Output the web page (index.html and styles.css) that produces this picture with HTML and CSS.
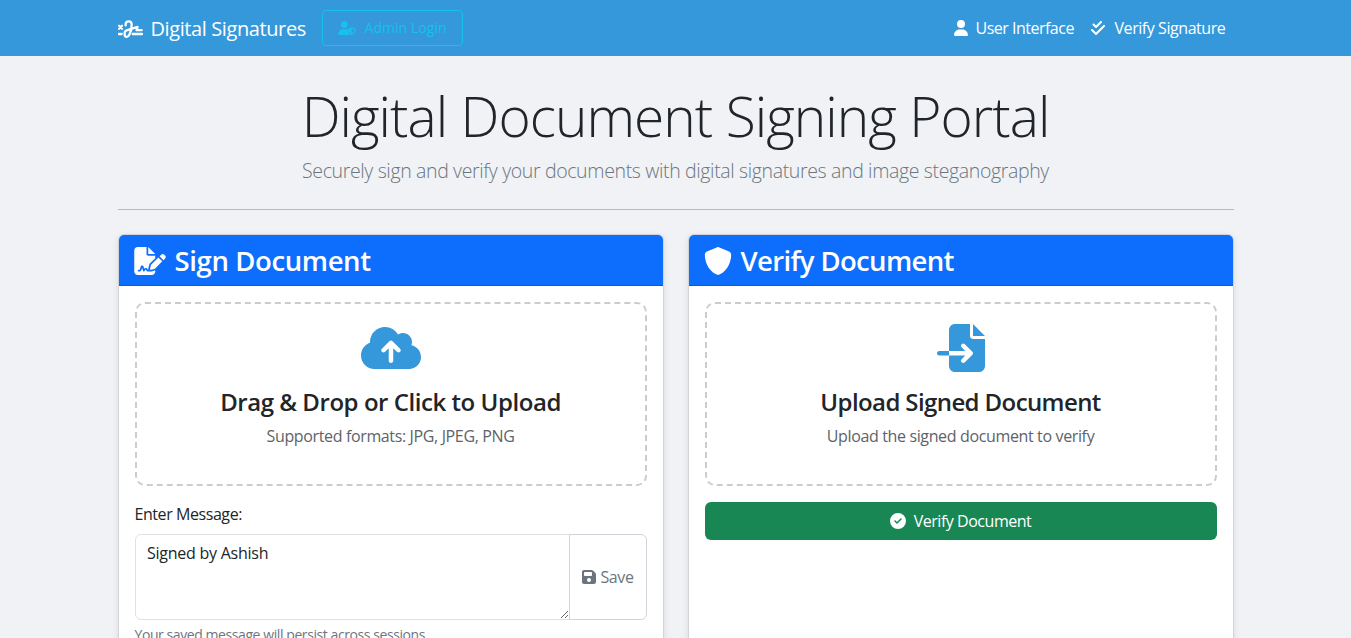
FILE: index.html
```html
<!DOCTYPE html>
<html lang="en">
<head>
<meta charset="utf-8">
<title>Digital Document Signing Portal</title>
<link rel="stylesheet" href="styles.css">
</head>
<body>
<nav class="navbar">
  <div class="container navbar-inner">
    <a class="brand">
      <svg class="icon icon-signature" viewBox="0 0 640 512"><path d="M195 165V140C195 90 230 58 275 58S350 90 350 140C350 250 325 345 285 415C265 450 240 455 220 455C185 455 170 430 170 395V355C170 320 190 300 220 290L500 200L475 285H605"/><path d="M26 172l76 76M102 172l-76 76M24 384H95M375 384H615"/></svg>
      <span>Digital Signatures</span>
    </a>
    <a class="btn-admin">
      <svg class="icon icon-admin" viewBox="0 0 640 512"><path d="M224 256A128 128 0 1 0 224 0a128 128 0 1 0 0 256zm-45.700 48C79.800 304 0 383.800 0 482.300C0 498.700 13.300 512 29.700 512H418.300c5 0 10-1 14-3.500C375 465 350 400 350 330c0-5 1-10 3-14-25-8-52-12-83.300-12H178.300z"/><path fill-rule="evenodd" d="M496 224c4 0 8 1 12 2.500l110 44c13 5 22 18 22 32 0 62-26 163-131 207-8 3-18 3-26 0-105-44-131-145-131-207 0-14 9-27 22-32l110-44c4-1.500 8-2.500 12-2.500zm0 50v185c68-31 91-96 95-146z"/></svg>
      <span>Admin Login</span>
    </a>
    <div class="nav-links">
      <a class="nav-link link-user">
        <svg class="icon icon-448" viewBox="0 0 448 512"><path d="M224 256A128 128 0 1 0 224 0a128 128 0 1 0 0 256zm-45.700 48C79.800 304 0 383.800 0 482.300C0 498.700 13.300 512 29.700 512H418.300c16.400 0 29.700-13.300 29.700-29.700C448 383.800 368.200 304 269.700 304H178.300z"/></svg>
        <span>User Interface</span>
      </a>
      <a class="nav-link link-verify">
        <svg class="icon icon-448" viewBox="0 0 448 512"><path d="M342.600 86.600c12.500-12.500 12.500-32.800 0-45.300s-32.800-12.500-45.300 0L160 178.700l-57.400-57.400c-12.500-12.500-32.800-12.500-45.300 0s-12.500 32.800 0 45.300l80 80c12.500 12.500 32.800 12.500 45.300 0l160-160zm96 128c12.500-12.500 12.500-32.800 0-45.300s-32.800-12.500-45.300 0L160 402.700 54.600 297.400c-12.500-12.500-32.800-12.500-45.300 0s-12.500 32.800 0 45.300l128 128c12.500 12.500 32.800 12.500 45.300 0l256-256z"/></svg>
        <span>Verify Signature</span>
      </a>
    </div>
  </div>
</nav>

<main class="container">
  <header class="hero">
    <h1 class="hero-title">Digital Document Signing Portal</h1>
    <p class="hero-lead">Securely sign and verify your documents with digital signatures and image steganography</p>
  </header>
  <hr class="rule">
  <div class="columns">
    <section class="card">
      <div class="card-header">
        <svg class="icon icon-file" viewBox="0 0 576 512"><path d="M64 0C28.700 0 0 28.700 0 64V448c0 35.300 28.700 64 64 64H320c35.300 0 64-28.700 64-64V428.700c-2.700 1.100-5.400 2-8.200 2.700l-60.100 15c-3 .7-6 1.200-9 1.400c-.9 .1-1.800 .2-2.700 .2H240c-6.100 0-11.600-3.400-14.300-8.800l-8.800-17.700c-1.700-3.400-5.100-5.500-8.800-5.500s-7.200 2.100-8.800 5.500l-8.800 17.700c-2.900 5.900-9.200 9.400-15.700 8.800s-12.100-5.100-13.900-11.300L144 381l-9.800 32.800c-6.100 20.300-24.800 34.200-46 34.200H80c-8.800 0-16-7.200-16-16s7.200-16 16-16h8.200c7.100 0 13.300-4.600 15.300-11.400l14.900-49.500c3.400-11.300 13.800-19.100 25.600-19.100s22.200 7.700 25.600 19.100l11.600 38.600c7.400-6.200 16.800-9.700 26.800-9.700c15.900 0 30.400 9 37.500 23.200l4.400 8.800h8.900c-3.100-8.800-3.700-18.400-1.400-27.800l15-60.100c2.800-11.300 8.600-21.500 16.800-29.700L384 203.600V160H256c-17.700 0-32-14.300-32-32V0H64zM256 0V128H384L256 0zM549.800 139.700c-15.600-15.600-40.900-15.600-56.600 0l-29.400 29.400 71 71 29.400-29.400c15.600-15.600 15.600-40.900 0-56.600l-14.400-14.400zM311.900 321c-4.100 4.100-7 9.200-8.400 14.900l-15 60.100c-1.400 5.500 .2 11.200 4.200 15.200s9.700 5.600 15.200 4.200l60.100-15c5.600-1.400 10.800-4.300 14.900-8.400L512.100 262.700l-71-71L311.900 321z"/></svg>
        <h2 class="card-title title-sign">Sign Document</h2>
      </div>
      <div class="card-body">
        <div class="upload">
          <svg class="icon icon-cloud" viewBox="0 0 640 512"><path d="M144 480C64.500 480 0 415.500 0 336c0-62.800 40.200-116.200 96.200-135.900c-.1-2.700-.2-5.400-.2-8.100c0-88.400 71.600-160 160-160c59.300 0 111 32.200 138.700 80.200C409.900 102 428.300 96 448 96c53 0 96 43 96 96c0 12.200-2.300 23.800-6.400 34.600C596 238.400 640 290.100 640 352c0 70.700-57.300 128-128 128H144zm79-217c-9.400 9.400-9.400 24.600 0 33.900s24.600 9.400 33.900 0l39-39V392c0 13.300 10.700 24 24 24s24-10.700 24-24V257.900l39 39c9.400 9.400 24.600 9.400 33.900 0s9.400-24.600 0-33.900l-80-80c-9.400-9.400-24.600-9.400-33.900 0l-80 80z"/></svg>
          <h3 class="upload-title upload-title-sign">Drag &amp; Drop or Click to Upload</h3>
          <p class="upload-hint hint-sign">Supported formats: JPG, JPEG, PNG</p>
        </div>
        <label class="label">Enter Message:</label>
        <div class="input-group">
          <textarea class="message">Signed by Ashish</textarea>
          <button class="btn-save">
            <svg class="icon icon-448" viewBox="0 0 448 512"><path d="M64 32C28.700 32 0 60.700 0 96V416c0 35.300 28.700 64 64 64H384c35.300 0 64-28.700 64-64V173.300c0-17-6.700-33.300-18.700-45.300L352 50.700C340 38.700 323.700 32 306.700 32H64zm0 96c0-17.700 14.300-32 32-32H288c17.700 0 32 14.300 32 32v64c0 17.700-14.300 32-32 32H96c-17.700 0-32-14.300-32-32V128zM224 288a64 64 0 1 1 0 128 64 64 0 1 1 0-128z"/></svg>
            <span>Save</span>
          </button>
        </div>
        <small class="help">Your saved message will persist across sessions</small>
      </div>
    </section>
    <section class="card">
      <div class="card-header">
        <svg class="icon icon-shield" viewBox="0 0 512 512"><path d="M256 0c4.600 0 9.200 1 13.400 2.900L457.700 82.800c22 9.300 38.400 31 38.300 57.200c-.5 99.200-41.300 280.700-213.600 363.200c-16.700 8-36.100 8-52.800 0C57.300 420.700 16.500 239.200 16 140c-.1-26.200 16.300-47.900 38.300-57.200L242.700 2.900C246.800 1 251.400 0 256 0z"/></svg>
        <h2 class="card-title title-verify">Verify Document</h2>
      </div>
      <div class="card-body">
        <div class="upload">
          <svg class="icon icon-import" viewBox="0 0 512 512"><path d="M128 64c0-35.300 28.700-64 64-64H352V128c0 17.700 14.300 32 32 32H512V448c0 35.300-28.700 64-64 64H192c-35.300 0-64-28.700-64-64V336H302.100l-39 39c-9.400 9.400-9.400 24.600 0 33.900s24.600 9.400 33.900 0l80-80c9.400-9.400 9.400-24.600 0-33.900l-80-80c-9.400-9.400-24.600-9.400-33.900 0s-9.400 24.600 0 33.900l39 39H128V64zm0 224v48H24c-13.300 0-24-10.700-24-24s10.700-24 24-24H128zM512 128H384V0L512 128z"/></svg>
          <h3 class="upload-title upload-title-verify">Upload Signed Document</h3>
          <p class="upload-hint hint-verify">Upload the signed document to verify</p>
        </div>
        <button class="btn-verify">
          <svg class="icon icon-check" viewBox="0 0 512 512"><path d="M256 512A256 256 0 1 0 256 0a256 256 0 1 0 0 512zM369 209L241 337c-9.400 9.400-24.600 9.400-33.900 0l-64-64c-9.400-9.400-9.400-24.600 0-33.900s24.600-9.400 33.900 0l47 47L335 175c9.400-9.400 24.600-9.400 33.900 0s9.400 24.600 0 33.900z"/></svg>
          <span>Verify Document</span>
        </button>
      </div>
    </section>
  </div>
</main>
</body>
</html>
```
FILE: styles.css
```css
* { box-sizing: border-box; }
html { overflow: hidden; }
body {
  margin: 0;
  height: 638px;
  overflow: hidden;
  background: #f0f2f5;
  color: #212529;
  font: 400 16px/24px "Open Sans", "Noto Sans", sans-serif;
}
h1, h2, h3, p { margin: 0; }
button, textarea { font: inherit; letter-spacing: inherit; }
span, h1, h2, h3, p, label, small { white-space: nowrap; }
.icon { fill: currentColor; flex: none; display: block; }
.icon-448 { width: 14px; height: 16px; }
.container { width: 1140px; margin: 0 auto; padding: 0 12px; }

.navbar { height: 56px; background: #3498db; color: #fff; }
.navbar-inner { height: 56px; display: flex; align-items: center; }
.brand { display: flex; align-items: center; gap: 8px; width: 188px; margin-right: 16px; font-size: 20px; line-height: 30px; letter-spacing: -0.4px; }
.brand span { padding-top: 2px; }
.icon-signature {
  width: 25px; height: 20px; margin-top: 1px;
  fill: none; stroke: currentColor; stroke-width: 58;
  stroke-linecap: round; stroke-linejoin: round;
}
.btn-admin {
  display: flex; align-items: center; gap: 8px;
  width: 141px; height: 36px; padding: 0 15px;
  border: 1px solid #17c0ee; border-radius: 4px;
  color: #17c0ee; font-size: 14px; letter-spacing: 0.05px;
}
.btn-admin span { padding-left: 1px; }
.icon-admin { width: 18px; height: 14px; }
.nav-links { display: flex; gap: 16px; margin-left: auto; padding-right: 7px; }
.nav-link { display: flex; align-items: center; gap: 8px; }
.link-user { width: 121px; letter-spacing: -0.5px; }
.link-verify { width: 136px; gap: 10px; letter-spacing: -0.44px; }

.hero { padding-top: 24px; text-align: center; }
.hero-title { height: 67px; margin-top: 2px; font-size: 55px; line-height: 67px; font-weight: 300; letter-spacing: -0.95px; }
.hero-lead { margin-top: 7px; font-size: 19.5px; line-height: 30px; font-weight: 300; letter-spacing: -0.36px; color: #6c757d; }
.hero-title, .hero-lead { display: flex; justify-content: center; }
.rule { height: 1px; margin: 23px 0 24px; border: 0; background: #b9bbbe; }

.columns { display: grid; grid-template-columns: 1fr 1fr; gap: 24px; }
.card {
  height: 520px; background: #fff;
  border: 1px solid #d2d4d7; border-radius: 6px;
  box-shadow: 0 2px 6px rgba(0, 0, 0, .1);
}
.card-header {
  display: flex; align-items: center; gap: 9px;
  height: 51px; padding: 1px 15px 0;
  background: #0d6efd; color: #fff;
  border-bottom: 1px solid #0b5cd4; border-radius: 5px 5px 0 0;
}
.card-title { padding-top: 1px; font-size: 27.5px; line-height: 34px; font-weight: 600; }
.title-sign { letter-spacing: -0.38px; }
.title-verify { letter-spacing: -0.64px; }
.icon-file { width: 32px; height: 28px; }
.icon-shield { width: 28px; height: 28px; }
.card-body { padding: 16px; }
.upload {
  display: flex; flex-direction: column; align-items: center;
  height: 184px; padding-top: 20px;
  border: 2px dashed #ccc; border-radius: 10px;
}
.icon-cloud, .icon-import { height: 48px; color: #3498db; }
.icon-cloud { width: 60px; }
.icon-import { width: 48px; }
.upload-title { margin-top: 15px; font-size: 24px; line-height: 29px; font-weight: 600; }
.upload-title-sign { letter-spacing: -0.45px; }
.upload-title-verify { letter-spacing: -0.6px; }
.upload-hint { margin-top: 8px; letter-spacing: -0.36px; color: #5d6369; }
.label { display: block; margin: 16px 0 8px; letter-spacing: -0.43px; }
.input-group { display: flex; height: 86px; }
.message {
  width: 435px; padding: 6px 11.5px; margin: 0 -1px 0 0;
  border: 1px solid #dee2e6; border-radius: 6px 0 0 6px;
  background: #fff; color: #212529; letter-spacing: -0.25px; outline: 0; resize: vertical;
}
.btn-save {
  flex: 1; display: flex; align-items: center; gap: 5px; padding: 0 12px;
  border: 1px solid #ced4da; border-radius: 0 6px 6px 0;
  background: #fff; color: #6c757d; letter-spacing: -0.4px;
}
.help { display: block; margin-top: 4px; font-size: 14px; line-height: 21px; letter-spacing: -0.42px; color: #6c757d; }
.btn-verify {
  display: flex; align-items: center; justify-content: center; gap: 8px;
  width: 100%; height: 38px; margin-top: 16px; padding: 0;
  border: 0; border-radius: 6px; background: #198754; color: #fff; letter-spacing: -0.47px;
}
.icon-check { width: 16px; height: 16px; }
```
